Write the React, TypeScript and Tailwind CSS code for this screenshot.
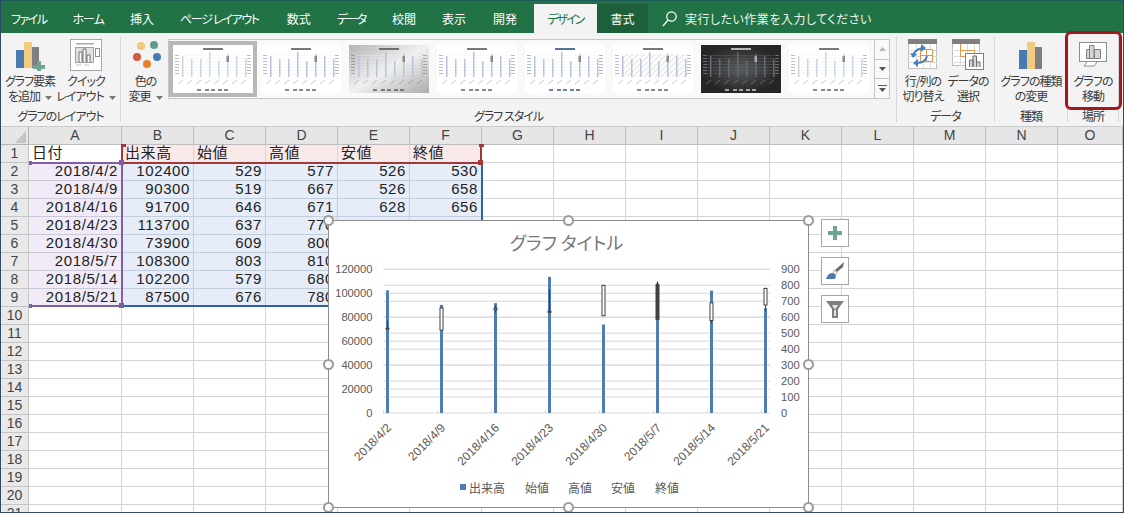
import React from 'react';

const tabs = [
  { label: 'ファイル', cls: 'px-[13px] first:pl-[10px] tracking-[-1.5px]' },
  { label: 'ホーム', cls: 'px-[13px] tracking-[-1px]' },
  { label: '挿入', cls: 'px-[13px]' },
  { label: 'ページ レイアウト', cls: 'pl-[13px] pr-[15px] tracking-[-1.3px]' },
  { label: '数式', cls: 'px-[13px]' },
  { label: 'データ', cls: 'px-[13px] tracking-[-1.5px]' },
  { label: '校閲', cls: 'px-[13px]' },
  { label: '表示', cls: 'px-[13px]' },
  { label: '開発', cls: 'px-[14px]' },
];
const columns = ['A', 'B', 'C', 'D', 'E', 'F', 'G', 'H', 'I', 'J', 'K', 'L', 'M', 'N', 'O'];
const rowNumbers = Array.from({ length: 21 }, (_, i) => i + 1);

const sheet = [
  ['2018/4/2', '102400', '529', '577', '526', '530'],
  ['2018/4/9', '90300', '519', '667', '526', '658'],
  ['2018/4/16', '91700', '646', '671', '628', '656'],
  ['2018/4/23', '113700', '637', '770', '630', '630'],
  ['2018/4/30', '73900', '609', '800', '600', '800'],
  ['2018/5/7', '108300', '803', '810', '580', '586'],
  ['2018/5/14', '102200', '579', '680', '560', '690'],
  ['2018/5/21', '87500', '676', '780', '620', '780'],
];
const headers = ['日付', '出来高', '始値', '高値', '安値', '終値'];

// candles are read off the picture (right axis values)
const volumes = [102400, 90300, 91700, 113700, 73900, 108300, 102200, 87500];
const candles = [
  { open: 529, close: 530, high: 577, low: 526 },
  { open: 519, close: 658, high: 658, low: 519 },
  { open: 646, close: 656, high: 671, low: 628 },
  { open: 637, close: 631, high: 770, low: 628 },
  { open: 609, close: 800, high: 800, low: 609 },
  { open: 803, close: 586, high: 825, low: 586 },
  { open: 579, close: 690, high: 690, low: 560 },
  { open: 676, close: 780, high: 785, low: 640 },
];
const dates = sheet.map((r) => r[0]);
const AXIS_Y = 413;
const TOP_Y = 269.3;
const volY = (v: number) => AXIS_Y - (v / 120000) * (AXIS_Y - TOP_Y);
const priceY = (v: number) => AXIS_Y - (v / 900) * (AXIS_Y - TOP_Y);

function Caret() {
  return (
    <svg width="7" height="4" viewBox="0 0 7 4" className="inline-block ml-[5px] align-middle">
      <path d="M0 0h7L3.5 4z" fill="#777" />
    </svg>
  );
}

function BarsIcon() {
  return (
    <svg width="24" height="27" viewBox="0 0 24 27" className="mt-[3px]">
      <rect x="0" y="8" width="8" height="19" fill="#4a7ab2" />
      <rect x="8" y="0" width="8" height="27" fill="#f1cb80" />
      <rect x="16" y="5" width="7" height="22" fill="#7f7f7f" />
    </svg>
  );
}

function AddElementIcon() {
  return (
    <svg width="30" height="32" viewBox="0 0 30 32">
      <rect x="1" y="11" width="8" height="18" fill="#4a7ab2" />
      <rect x="9" y="3" width="8" height="26" fill="#f1cb80" />
      <rect x="17" y="8" width="7" height="21" fill="#7f7f7f" />
      <path d="M22 22h4v4h4v4h-4v2h-4v-2h-4v-4h4z" fill="#6fa690" />
    </svg>
  );
}

function QuickLayoutIcon() {
  return (
    <svg width="32" height="32" viewBox="0 0 32 32" fill="none">
      <rect x="0.5" y="0.5" width="31" height="31" fill="#fff" stroke="#a6a6a6" />
      <rect x="6" y="4" width="18" height="1.5" fill="#a6a6a6" />
      <rect x="5.5" y="8.5" width="18" height="15" fill="#e2e2e2" stroke="#a0a0a0" />
      <path d="M9 23V13h3v10M13 23V10h3v13M17 23v-7h3v7" stroke="#6e6e6e" fill="#fff" />
      <rect x="25.5" y="9.5" width="4" height="8" fill="#fff" stroke="#8f8f8f" />
      <path d="M6 26h5M14 26h5" stroke="#c5c5c5" />
    </svg>
  );
}

function ColorsIcon() {
  return (
    <svg width="32" height="32" viewBox="0 0 32 32">
      <circle cx="11" cy="7" r="4" fill="#f1c77c" />
      <circle cx="24" cy="6" r="4" fill="#5f9c8e" />
      <circle cx="7" cy="18" r="4" fill="#d3593a" />
      <circle cx="27" cy="18" r="4" fill="#4a7ab2" />
      <circle cx="17" cy="25" r="4" fill="#e8802e" />
    </svg>
  );
}

function SwitchIcon() {
  return (
    <svg width="30" height="31" viewBox="0 0 30 31" fill="none">
      <rect x="0.5" y="0.5" width="28" height="29" fill="#fff" stroke="#bdbdbd" />
      <rect x="0" y="0" width="29" height="5" fill="#7f7f7f" />
      <path d="M0 11.5h29M0 17.5h29M0 23.5h29M8.5 5v25M15.5 5v25M22.5 5v25" stroke="#dcdcdc" />
      <rect x="12.5" y="10.5" width="12" height="12" fill="#fff" stroke="#e5954b" />
      <path d="M12 16.5h13M18.5 10v13" stroke="#e5954b" />
      <path d="M5 17c1-4 4-7 9-8M19 17c-1 4-4 7-10 7" stroke="#3f7fc4" strokeWidth="2" />
      <path d="M13 5l5 4-5 4zM10 20l-5 4 5 4z" fill="#3f7fc4" />
      <path d="M2 14l3 5 4-4z" fill="#3f7fc4" />
    </svg>
  );
}

function DataSelectIcon() {
  return (
    <svg width="32" height="31" viewBox="0 0 32 31" fill="none">
      <rect x="0.5" y="0.5" width="27" height="26" fill="#fff" stroke="#bdbdbd" />
      <rect x="0" y="0" width="28" height="5" fill="#7f7f7f" />
      <path d="M0 11.5h28M0 17.5h28M0 23.5h28M8.5 5v22M15.5 5v22M22.5 5v22" stroke="#dcdcdc" />
      <path d="M8.5 11.5h14v6h-14zM8.5 5v12" stroke="#e5954b" />
      <rect x="13.5" y="14.5" width="18" height="16" fill="#fff" stroke="#7f7f7f" />
      <path d="M17.5 28v-7h3.5v7M21 28V17h3.5v11M24.5 28v-5h3.5v5" stroke="#6e6e6e" fill="#d6d6d6" />
    </svg>
  );
}

function MoveChartIcon() {
  return (
    <svg width="28" height="25" viewBox="0 0 28 25" fill="none" className="mt-[3px]">
      <rect x="0.5" y="0.5" width="27" height="19" fill="#fff" stroke="#8f8f8f" />
      <path d="M8 20l-3 4h10l3-4" fill="#fff" stroke="#8f8f8f" />
      <path d="M7.5 16.5V7.5h3v9zM10.5 16.5V3.5h4.5v13zM15.5 16.5V7.5h6v9z" fill="#d4d4d4" stroke="#7f7f7f" />
    </svg>
  );
}

function LargeButton({ icon, lines, className, caret }: { icon: React.ReactNode; lines: string[]; className: string; caret?: boolean }) {
  return (
    <div className={`flex flex-col items-center pt-[6px] ${className}`}>
      <div className="h-[32px] flex items-start justify-center">{icon}</div>
      <div className="mt-[2px] text-center leading-[15px] whitespace-nowrap tracking-[-1px]">
        <div>{lines[0]}</div>
        <div>
          {lines[1]}
          {caret && <Caret />}
        </div>
      </div>
    </div>
  );
}

function RibbonGroup({ label, className, children }: { label: string; className: string; children: React.ReactNode }) {
  return (
    <div className={`flex flex-col h-[93px] shrink-0 ${className}`}>
      <div className="flex flex-1">{children}</div>
      <div className="h-[20px] leading-[20px] text-center whitespace-nowrap tracking-[-1px]">{label}</div>
    </div>
  );
}

function RibbonDivider() {
  return <div className="w-px h-[85px] mt-[4px] bg-[#d6d6d6] shrink-0" />;
}

// Miniature of the chart for the style gallery; the caption marks are only dashes
function Thumb({ variant }: { variant: 'plain' | 'soft' | 'grey' | 'light' | 'navy' | 'hatch' | 'dark' | 'pale' }) {
  const dark = variant === 'dark';
  const bars = [21, 18, 18, 25, 16, 23, 21, 18];
  const ink = dark ? '#d8d8d8' : variant === 'navy' ? '#2a4d86' : '#555';
  const bar = dark ? '#5d6a78' : variant === 'plain' || variant === 'pale' ? '#c9d6e6' : '#b7c4da';
  return (
    <svg width="80" height="48" viewBox="0 0 80 48" className="shrink-0">
      <defs>
        <linearGradient id="thumb-grey" x1="0" y1="0" x2="1" y2="1">
          <stop offset="0" stopColor="#b4b4b4" />
          <stop offset="0.5" stopColor="#f0f0f0" />
          <stop offset="1" stopColor="#acacac" />
        </linearGradient>
        <radialGradient id="thumb-dark">
          <stop offset="0" stopColor="#5a5a5a" />
          <stop offset="1" stopColor="#262626" />
        </radialGradient>
        <pattern id="thumb-hatch" width="4" height="4" patternUnits="userSpaceOnUse" patternTransform="rotate(45)">
          <rect width="4" height="4" fill="#fff" />
          <rect width="1" height="4" fill="#e2e2e2" />
        </pattern>
      </defs>
      <rect width="80" height="48" fill={dark ? 'url(#thumb-dark)' : variant === 'grey' ? 'url(#thumb-grey)' : '#fff'} />
      {variant === 'hatch' && <rect x="8" y="9" width="64" height="23" fill="url(#thumb-hatch)" />}
      <rect x="30" y="3" width="20" height="2" fill={ink} opacity="0.8" />
      {[10, 13, 16, 19, 22, 25, 28].map((y) => (
        <g key={y}>
          <rect x="2" y={y} width="4" height="1" fill={ink} opacity="0.4" />
          <rect x="74" y={y} width="4" height="1" fill={ink} opacity="0.4" />
          <rect x="7" y={y} width="66" height="0.4" fill={dark ? '#666' : '#ececec'} />
        </g>
      ))}
      {bars.map((h, i) => (
        <g key={i}>
          <rect x={9 + i * 9} y={32 - h} width="1.5" height={h} fill={bar} />
          {i === 5 && <rect x={9 + i * 9 - 0.5} y={11} width="2.5" height="6" fill={dark ? '#aaa' : '#8a8a8a'} />}
          <path d={`M${5 + i * 9} 39l5-4`} stroke={ink} strokeWidth="0.7" opacity="0.45" />
        </g>
      ))}
      {[24, 32, 38, 45, 51].map((x) => (
        <rect key={x} x={x} y="44" width="4" height="2" fill={ink} opacity="0.7" />
      ))}
    </svg>
  );
}

function ScrollButton({ children, last }: { children: React.ReactNode; last?: boolean }) {
  return <div className={`flex-1 flex items-center justify-center ${last ? '' : 'border-b border-[#c6c6c6]'}`}>{children}</div>;
}

function Ribbon() {
  return (
    <div className="flex h-[94px] bg-[#f3f3f3] border-b border-[#c9c9c9] text-[12px] text-[#3a3a3a]">
      <RibbonGroup label="グラフのレイアウト" className="w-[119px]">
        <LargeButton icon={<AddElementIcon />} lines={['グラフ要素', 'を追加']} caret className="w-[54px] ml-[2px]" />
        <LargeButton icon={<QuickLayoutIcon />} lines={['クイック', 'レイアウト']} caret className="w-[56px] ml-[1px]" />
      </RibbonGroup>
      <RibbonDivider />
      <RibbonGroup label="グラフ スタイル" className="w-[775px]">
        <LargeButton icon={<ColorsIcon />} lines={['色の', '変更']} caret className="w-[45px] ml-[2px]" />
        <div className="flex h-[60px] w-[722px] mt-[6px] border border-[#c6c6c6] bg-[#f9f9f9]">
          <div className="flex flex-1 items-center gap-[8px] pl-[4px]">
            <div className="flex outline-4 outline-[#b7b7b7]">
              <Thumb variant="plain" />
            </div>
            <Thumb variant="soft" />
            <Thumb variant="grey" />
            <Thumb variant="light" />
            <Thumb variant="navy" />
            <Thumb variant="hatch" />
            <Thumb variant="dark" />
            <Thumb variant="pale" />
          </div>
          <div className="flex flex-col w-[15px] border-l border-[#c6c6c6]">
            <ScrollButton>
              <svg width="7" height="4" viewBox="0 0 7 4"><path d="M0 4h7L3.5 0z" fill="#b5b5b5" /></svg>
            </ScrollButton>
            <ScrollButton>
              <svg width="7" height="4" viewBox="0 0 7 4"><path d="M0 0h7L3.5 4z" fill="#555" /></svg>
            </ScrollButton>
            <ScrollButton last>
              <svg width="9" height="7" viewBox="0 0 9 7"><path d="M0 0h9v1H0zM1 3h7L4.5 7z" fill="#555" /></svg>
            </ScrollButton>
          </div>
        </div>
      </RibbonGroup>
      <RibbonDivider />
      <RibbonGroup label="データ" className="w-[97px]">
        <LargeButton icon={<SwitchIcon />} lines={['行/列の', '切り替え']} className="w-[46px] ml-[3px]" />
        <LargeButton icon={<DataSelectIcon />} lines={['データの', '選択']} className="w-[44px]" />
      </RibbonGroup>
      <RibbonDivider />
      <RibbonGroup label="種類" className="w-[72px]">
        <LargeButton icon={<BarsIcon />} lines={['グラフの種類', 'の変更']} className="w-[72px]" />
      </RibbonGroup>
      <RibbonDivider />
      <RibbonGroup label="場所" className="w-[50px]">
        <LargeButton icon={<MoveChartIcon />} lines={['グラフの', '移動']} className="w-[50px]" />
      </RibbonGroup>
      <RibbonDivider />
    </div>
  );
}

function Cell({ col, row }: { col: number; row: number }) {
  let text = '';
  let align = 'justify-end pr-[3px]';
  let fill = 'bg-white border-[#d4d4d4]';
  if (col < 6 && row === 1) {
    text = headers[col];
    align = 'justify-start pl-[3px]';
    fill = col === 0 ? 'bg-white border-[#d4d4d4]' : 'bg-[#f9e9e9] border-[#e4d2d2]';
  } else if (col < 6 && row >= 2 && row <= 9) {
    text = sheet[row - 2][col];
    fill = col === 0 ? 'bg-[#f0ebf6] border-[#c8c8d8]' : 'bg-[#e6edf8] border-[#c3cedd]';
  }
  return (
    <div className={`flex items-center h-[18px] border-r border-b overflow-hidden whitespace-nowrap ${align} ${fill}`}>
      {text}
    </div>
  );
}

function Sheet() {
  return (
    <div className="relative grid grid-cols-[28px_93px_repeat(13,72px)_65px] auto-rows-[18px] font-['Liberation_Sans','Noto_Sans_CJK_JP',sans-serif] text-[15px] tracking-[0.6px] text-[#222]">
      <div className="relative bg-[#e6e6e6] border-r border-b border-[#b5b5b5]">
        <svg width="11" height="12" viewBox="0 0 11 12" className="absolute right-[2px] bottom-[1px]">
          <path d="M11 0v12H0z" fill="#c4c4c4" />
        </svg>
      </div>
      {columns.map((c) => (
        <div key={c} className="flex items-center justify-center bg-[#e6e6e6] border-r border-b border-[#bdbdbd] text-[14px] tracking-normal text-[#444]">
          {c}
        </div>
      ))}
      {rowNumbers.map((row) => (
        <React.Fragment key={row}>
          <div className="flex items-center justify-center bg-[#e9e9e9] border-r border-b border-[#c4c4c4] text-[14px] tracking-normal text-[#444]">
            {row}
          </div>
          {columns.map((_, col) => (
            <Cell key={col} col={col} row={row} />
          ))}
        </React.Fragment>
      ))}
      {/* range highlights of the selected chart */}
      <div className="absolute left-[120px] top-[19px] w-[2px] h-[15px] bg-[#a4373a]" />
      <div className="absolute left-[120px] top-[35px] w-[361px] h-[2px] bg-[#a4373a]" />
      <div className="absolute left-[479px] top-[19px] w-[2px] h-[15px] bg-[#a4373a]" />
      <div className="absolute left-[120px] top-[17px] w-[5px] h-[3px] bg-[#a4373a]" />
      <div className="absolute left-[478px] top-[17px] w-[5px] h-[3px] bg-[#a4373a]" />
      <div className="absolute left-[477px] top-[33px] w-[5px] h-[5px] bg-[#a4373a]" />
      <div className="absolute left-[480px] top-[38px] w-[2px] h-[141px] bg-[#2e62a8]" />
      <div className="absolute left-[122px] top-[178px] w-[360px] h-[2px] bg-[#2e62a8]" />
      <div className="absolute left-[29px] top-[35px] w-[92px] h-[2px] bg-[#7e60a2]" />
      <div className="absolute left-[29px] top-[178px] w-[92px] h-[2px] bg-[#7e60a2]" />
      <div className="absolute left-[120px] top-[35px] w-[2px] h-[144px] bg-[#7e60a2]" />
      <div className="absolute left-[28px] top-[34px] w-[3px] h-[4px] bg-[#7e60a2]" />
      <div className="absolute left-[28px] top-[177px] w-[3px] h-[4px] bg-[#7e60a2]" />
      <div className="absolute left-[118px] top-[33px] w-[5px] h-[5px] bg-[#7e60a2]" />
      <div className="absolute left-[118px] top-[176px] w-[5px] h-[5px] bg-[#7e60a2]" />
    </div>
  );
}

function Handle({ className }: { className: string }) {
  return <span className={`absolute w-[11px] h-[11px] rounded-full bg-white border-2 border-[#9a9a9a] ${className}`} />;
}

function ChartSvg() {
  const grid = [0, 1, 2, 3, 4, 5, 6].map((i) => AXIS_Y - (i * (AXIS_Y - TOP_Y)) / 6);
  const grid2 = [1, 2, 3, 4, 5, 6, 7, 8, 9].map((i) => AXIS_Y - (i * (AXIS_Y - TOP_Y)) / 9);
  return (
    <svg width="479" height="286" viewBox="329 221 479 286" className="block font-['Liberation_Sans','Noto_Sans_CJK_JP',sans-serif]">
      {[...grid, ...grid2].map((y, i) => (
        <line key={i} x1="383.5" x2="770" y1={y} y2={y} stroke="#d9d9d9" />
      ))}
      {[0, 1, 2, 3, 4, 5, 6, 7, 8].map((i) => (
        <line key={i} x1={383.5 + i * 54} x2={383.5 + i * 54} y1={AXIS_Y - 3} y2={AXIS_Y} stroke="#d9d9d9" />
      ))}
      {volumes.map((v, i) => (
        <rect key={i} x={386 + i * 54} y={volY(v)} width="3" height={AXIS_Y - volY(v)} fill="#4f7db0" />
      ))}
      {candles.map((c, i) => {
        const x = 387.5 + i * 54;
        const up = c.close >= c.open;
        const top = priceY(Math.max(c.open, c.close));
        const bottom = priceY(Math.min(c.open, c.close));
        return (
          <g key={i}>
            <line x1={x} x2={x} y1={priceY(c.high)} y2={priceY(c.low)} stroke="#404040" />
            <rect x={x - 1.5} y={top} width="3" height={Math.max(bottom - top, 0.6)} fill={up ? '#fff' : '#404040'} stroke="#404040" />
          </g>
        );
      })}
      {[0, 20000, 40000, 60000, 80000, 100000, 120000].map((v) => (
        <text key={v} x="372.5" y={volY(v) + 4} textAnchor="end" fontSize="11.2" fill="#595959">
          {v}
        </text>
      ))}
      {[0, 100, 200, 300, 400, 500, 600, 700, 800, 900].map((v) => (
        <text key={v} x="781" y={priceY(v) + 4} fontSize="11.2" fill="#595959">
          {v}
        </text>
      ))}
      {dates.map((d, i) => (
        <text key={d} x={392 + i * 54} y="428.5" textAnchor="end" fontSize="12" fill="#595959" transform={`rotate(-45 ${392 + i * 54} 428.5)`}>
          {d}
        </text>
      ))}
      <text x="566.5" y="250" textAnchor="middle" fontSize="18" fill="#767676" className="font-['Noto_Sans_CJK_JP',sans-serif]">
        グラフ タイトル
      </text>
      <rect x="460" y="484" width="6" height="6" fill="#4f7db0" />
      {[
        ['出来高', 469],
        ['始値', 525],
        ['高値', 568],
        ['安値', 611],
        ['終値', 655],
      ].map(([label, x]) => (
        <text key={label} x={x} y="492.5" fontSize="12" fill="#595959" className="font-['Noto_Sans_CJK_JP',sans-serif]">
          {label}
        </text>
      ))}
    </svg>
  );
}

function ChartButton({ children }: { children: React.ReactNode }) {
  return <div className="flex items-center justify-center w-[28px] h-[28px] bg-white border border-[#a6a6a6]">{children}</div>;
}

function Chart() {
  return (
    <>
      <div className="absolute left-[327px] top-[220px] w-[481px] h-[288px] bg-white border border-[#8c8c8c]">
        <ChartSvg />
        <Handle className="left-[-6px] top-[-6px]" />
        <Handle className="left-[234px] top-[-6px]" />
        <Handle className="right-[-6px] top-[-6px]" />
        <Handle className="left-[-6px] top-[138px]" />
        <Handle className="right-[-6px] top-[138px]" />
        <Handle className="left-[-6px] bottom-[-6px]" />
        <Handle className="left-[234px] bottom-[-6px]" />
        <Handle className="right-[-6px] bottom-[-6px]" />
      </div>
      <div className="absolute left-[820px] top-[219px] flex flex-col gap-[10px]">
        <ChartButton>
          <svg width="14" height="14" viewBox="0 0 14 14"><path d="M5 0h4v5h5v4H9v5H5V9H0V5h5z" fill="#6fa690" /></svg>
        </ChartButton>
        <ChartButton>
          <svg width="18" height="18" viewBox="0 0 18 18">
            <path d="M18 0l-1 5-6 5-2-2z" fill="#6b6b6b" />
            <path d="M8 8l3 3-1 2-3-2z" fill="#fff" stroke="#9a9a9a" strokeWidth="0.7" />
            <path d="M6 11c-3 0-5 3-6 6h9c1-2 1-3 0-5z" fill="#4a7ab2" />
          </svg>
        </ChartButton>
        <ChartButton>
          <svg width="18" height="17" viewBox="0 0 18 17">
            <path d="M0 0h18l-6 8v9H6V8z" fill="#7f7f7f" />
            <path d="M6 4h6l-2.5 4h-1zM8 9h2v6H8z" fill="#e4e4e4" />
          </svg>
        </ChartButton>
      </div>
    </>
  );
}

function Tabs() {
  return (
    <div className="flex items-end h-[33px] bg-[#217346] border-t border-[#1d5a5a] text-[12px] text-white">
      {tabs.map((t) => (
        <div key={t.label} className={`h-[29px] leading-[29px] whitespace-nowrap ${t.cls}`}>
          {t.label}
        </div>
      ))}
      <div className="h-[29px] w-[63px] ml-[3px] leading-[29px] text-center bg-[#f3f3f3] text-[#217346] tracking-[-2px]">デザイン</div>
      <div className="h-[29px] w-[51px] leading-[29px] text-center bg-[#1d5f3a]">書式</div>
      <div className="flex items-center h-[29px] pl-[14px] gap-[8px] text-[#eef5f0] tracking-[0.5px]">
        <svg width="15" height="16" viewBox="0 0 15 16" fill="none" stroke="#fff" strokeWidth="1.2">
          <circle cx="9.5" cy="5.5" r="4.7" />
          <path d="M6 9L1 15" />
        </svg>
        <span>実行したい作業を入力してください</span>
      </div>
    </div>
  );
}

export default function App() {
  return (
    <div className="relative w-[1124px] h-[513px] overflow-hidden bg-white border-l border-r border-b border-[#2f4a66] font-['Noto_Sans_CJK_JP','Liberation_Sans',sans-serif] [font-feature-settings:'palt']">
      <Tabs />
      <Ribbon />
      <Sheet />
      <Chart />
      {/* red callout around 移動 button */}
      <div className="absolute left-[1064px] top-[31px] w-[57px] h-[79px] border-[3px] border-[#a31818] rounded-[6px]" />
    </div>
  );
}
